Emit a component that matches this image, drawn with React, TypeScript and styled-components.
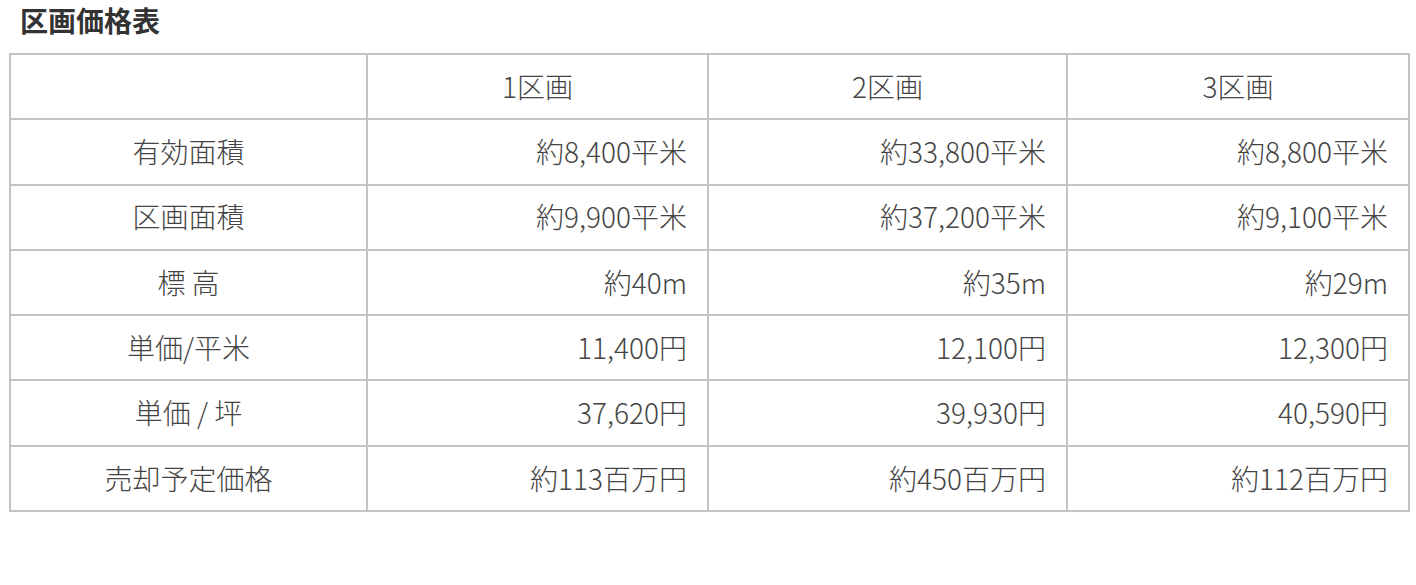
import React from 'react';
import styled, { createGlobalStyle } from 'styled-components';

const GlobalStyle = createGlobalStyle`
    body {
        margin: 0;
        background: #fff;
        font-family: "Noto Sans CJK JP", "Noto Sans", sans-serif;
        color: #333;
    }
`;

interface PlotRow {
    label: string;
    values: string[];
}

const rows: PlotRow[] = [
    { label: '有効面積', values: ['約8,400平米', '約33,800平米', '約8,800平米'] },
    { label: '区画面積', values: ['約9,900平米', '約37,200平米', '約9,100平米'] },
    { label: '標 高', values: ['約40m', '約35m', '約29m'] },
    { label: '単価/平米', values: ['11,400円', '12,100円', '12,300円'] },
    { label: '単価 / 坪', values: ['37,620円', '39,930円', '40,590円'] },
    { label: '売却予定価格', values: ['約113百万円', '約450百万円', '約112百万円'] },
];

const Page = styled.div`
    padding: 0 8px 0 9px;
    width: 1416px;
    box-sizing: border-box;
`;

const Title = styled.h2`
    margin: 0 0 13px 11px;
    font-size: 28px;
    font-weight: 700;
    line-height: 40px;
    color: #333;
`;

const Table = styled.table`
    width: 1399px;
    border-collapse: collapse;
    table-layout: fixed;
    font-size: 28px;
    font-weight: 300;
    color: #444;
`;

const Cell = styled.td<{ align?: 'center' | 'right' }>`
    border: 2px solid #c4c4c4;
    height: 63.3px;
    padding: 0 20px;
    line-height: 1.2;
    text-align: ${(p) => p.align || 'right'};
    vertical-align: middle;
    white-space: nowrap;
`;

export default function App() {
    return (
        <Page>
            <GlobalStyle />
            <Title>区画価格表</Title>
            <Table>
                <colgroup>
                    <col style={{ width: 357 }} />
                    <col style={{ width: 341 }} />
                    <col style={{ width: 359 }} />
                    <col style={{ width: 342 }} />
                </colgroup>
                <tbody>
                    <tr>
                        <Cell align="center" />
                        <Cell align="center">1区画</Cell>
                        <Cell align="center">2区画</Cell>
                        <Cell align="center">3区画</Cell>
                    </tr>
                    {rows.map((row) => (
                        <tr key={row.label}>
                            <Cell align="center">{row.label}</Cell>
                            {row.values.map((v, i) => (
                                <Cell key={i}>{v}</Cell>
                            ))}
                        </tr>
                    ))}
                </tbody>
            </Table>
        </Page>
    );
}
